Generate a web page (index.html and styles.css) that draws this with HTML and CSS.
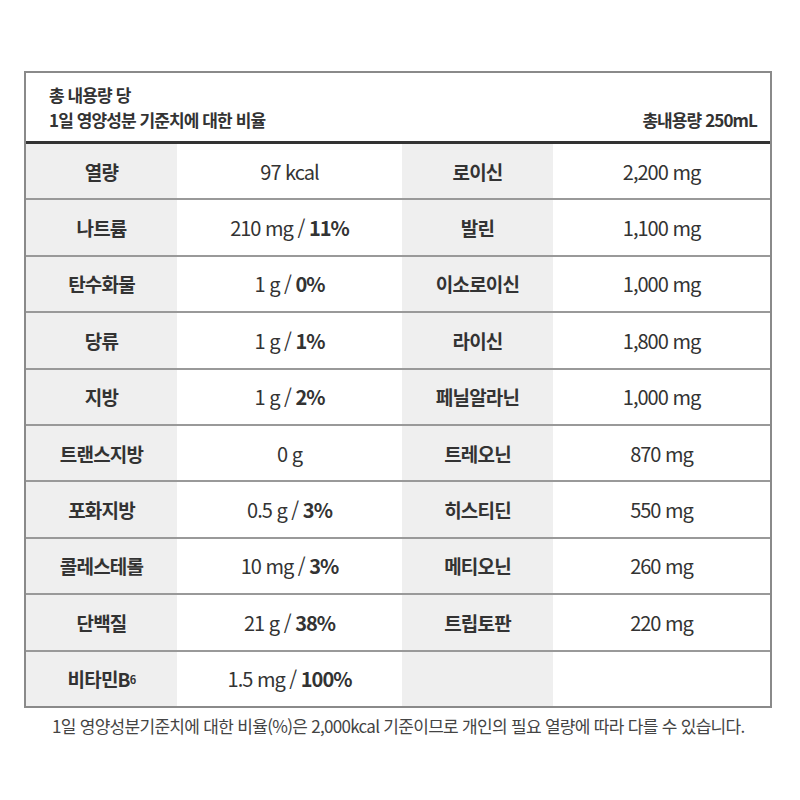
FILE: index.html
```html
<!DOCTYPE html>
<html lang="ko">
<head>
<meta charset="utf-8">
<link rel="stylesheet" href="styles.css">
</head>
<body>
<div class="wrap">
  <div class="table">
    <div class="head">
      <div class="head-left">총 내용량 당<br>1일 영양성분 기준치에 대한 비율</div>
      <div class="head-right">총내용량 250mL</div>
    </div>
    <div class="row"><div class="lab">열량</div><div class="val">97 kcal</div><div class="lab">로이신</div><div class="val">2,200 mg</div></div>
    <div class="row"><div class="lab">나트륨</div><div class="val">210 mg / <b>11%</b></div><div class="lab">발린</div><div class="val">1,100 mg</div></div>
    <div class="row"><div class="lab">탄수화물</div><div class="val">1 g / <b>0%</b></div><div class="lab">이소로이신</div><div class="val">1,000 mg</div></div>
    <div class="row"><div class="lab">당류</div><div class="val">1 g / <b>1%</b></div><div class="lab">라이신</div><div class="val">1,800 mg</div></div>
    <div class="row"><div class="lab">지방</div><div class="val">1 g / <b>2%</b></div><div class="lab">페닐알라닌</div><div class="val">1,000 mg</div></div>
    <div class="row"><div class="lab">트랜스지방</div><div class="val">0 g</div><div class="lab">트레오닌</div><div class="val">870 mg</div></div>
    <div class="row"><div class="lab">포화지방</div><div class="val">0.5 g / <b>3%</b></div><div class="lab">히스티딘</div><div class="val">550 mg</div></div>
    <div class="row"><div class="lab">콜레스테롤</div><div class="val">10 mg / <b>3%</b></div><div class="lab">메티오닌</div><div class="val">260 mg</div></div>
    <div class="row"><div class="lab">단백질</div><div class="val">21 g / <b>38%</b></div><div class="lab">트립토판</div><div class="val">220 mg</div></div>
    <div class="row last"><div class="lab">비타민B<sub>6</sub></div><div class="val">1.5 mg / <b>100%</b></div><div class="lab"></div><div class="val"></div></div>
  </div>
  <p class="note">1일 영양성분기준치에 대한 비율(%)은 2,000kcal 기준이므로 개인의 필요 열량에 따라 다를 수 있습니다.</p>
</div>
</body>
</html>
```

FILE: styles.css
```css
html, body {
  margin: 0;
  padding: 0;
  background: #fff;
}
body {
  font-family: "Noto Sans CJK KR", "Noto Sans", sans-serif;
  color: #333;
}
.wrap {
  padding: 71px 28px 0 24px;
}
.table {
  width: 748px;
  box-sizing: border-box;
  border: 2px solid #8a8a8a;
}
.head {
  height: 71px;
  box-sizing: border-box;
  border-bottom: 3px solid #333;
  display: flex;
  justify-content: space-between;
  align-items: flex-end;
  padding: 0 13px 9px 23px;
}
.head-left {
  font-size: 17px;
  font-weight: 700;
  line-height: 25px;
  letter-spacing: -0.9px;
  color: #333;
}
.head-right {
  font-size: 17px;
  font-weight: 700;
  letter-spacing: -0.9px;
  line-height: 25px;
}
.row {
  display: grid;
  grid-template-columns: 151px 225px 151px 1fr;
  height: 56.4px;
  box-sizing: border-box;
  border-bottom: 2px solid #999;
}
.row.last {
  border-bottom: 0;
  height: 54.4px;
}
.lab, .val {
  display: flex;
  align-items: center;
  justify-content: center;
  font-size: 19px;
  letter-spacing: -0.8px;
}
.lab {
  background: #efefef;
  font-weight: 700;
}
.val {
  background: #fff;
  font-weight: 400;
  font-size: 20px;
  letter-spacing: -1px;
  white-space: pre;
}
.val b {
  font-weight: 700;
}
.lab sub {
  font-size: 11px;
  vertical-align: -3px;
  line-height: 0;
}
.note {
  margin: 5px 0 0 28px;
  font-size: 17px;
  letter-spacing: -0.7px;
  color: #444;
}
```
